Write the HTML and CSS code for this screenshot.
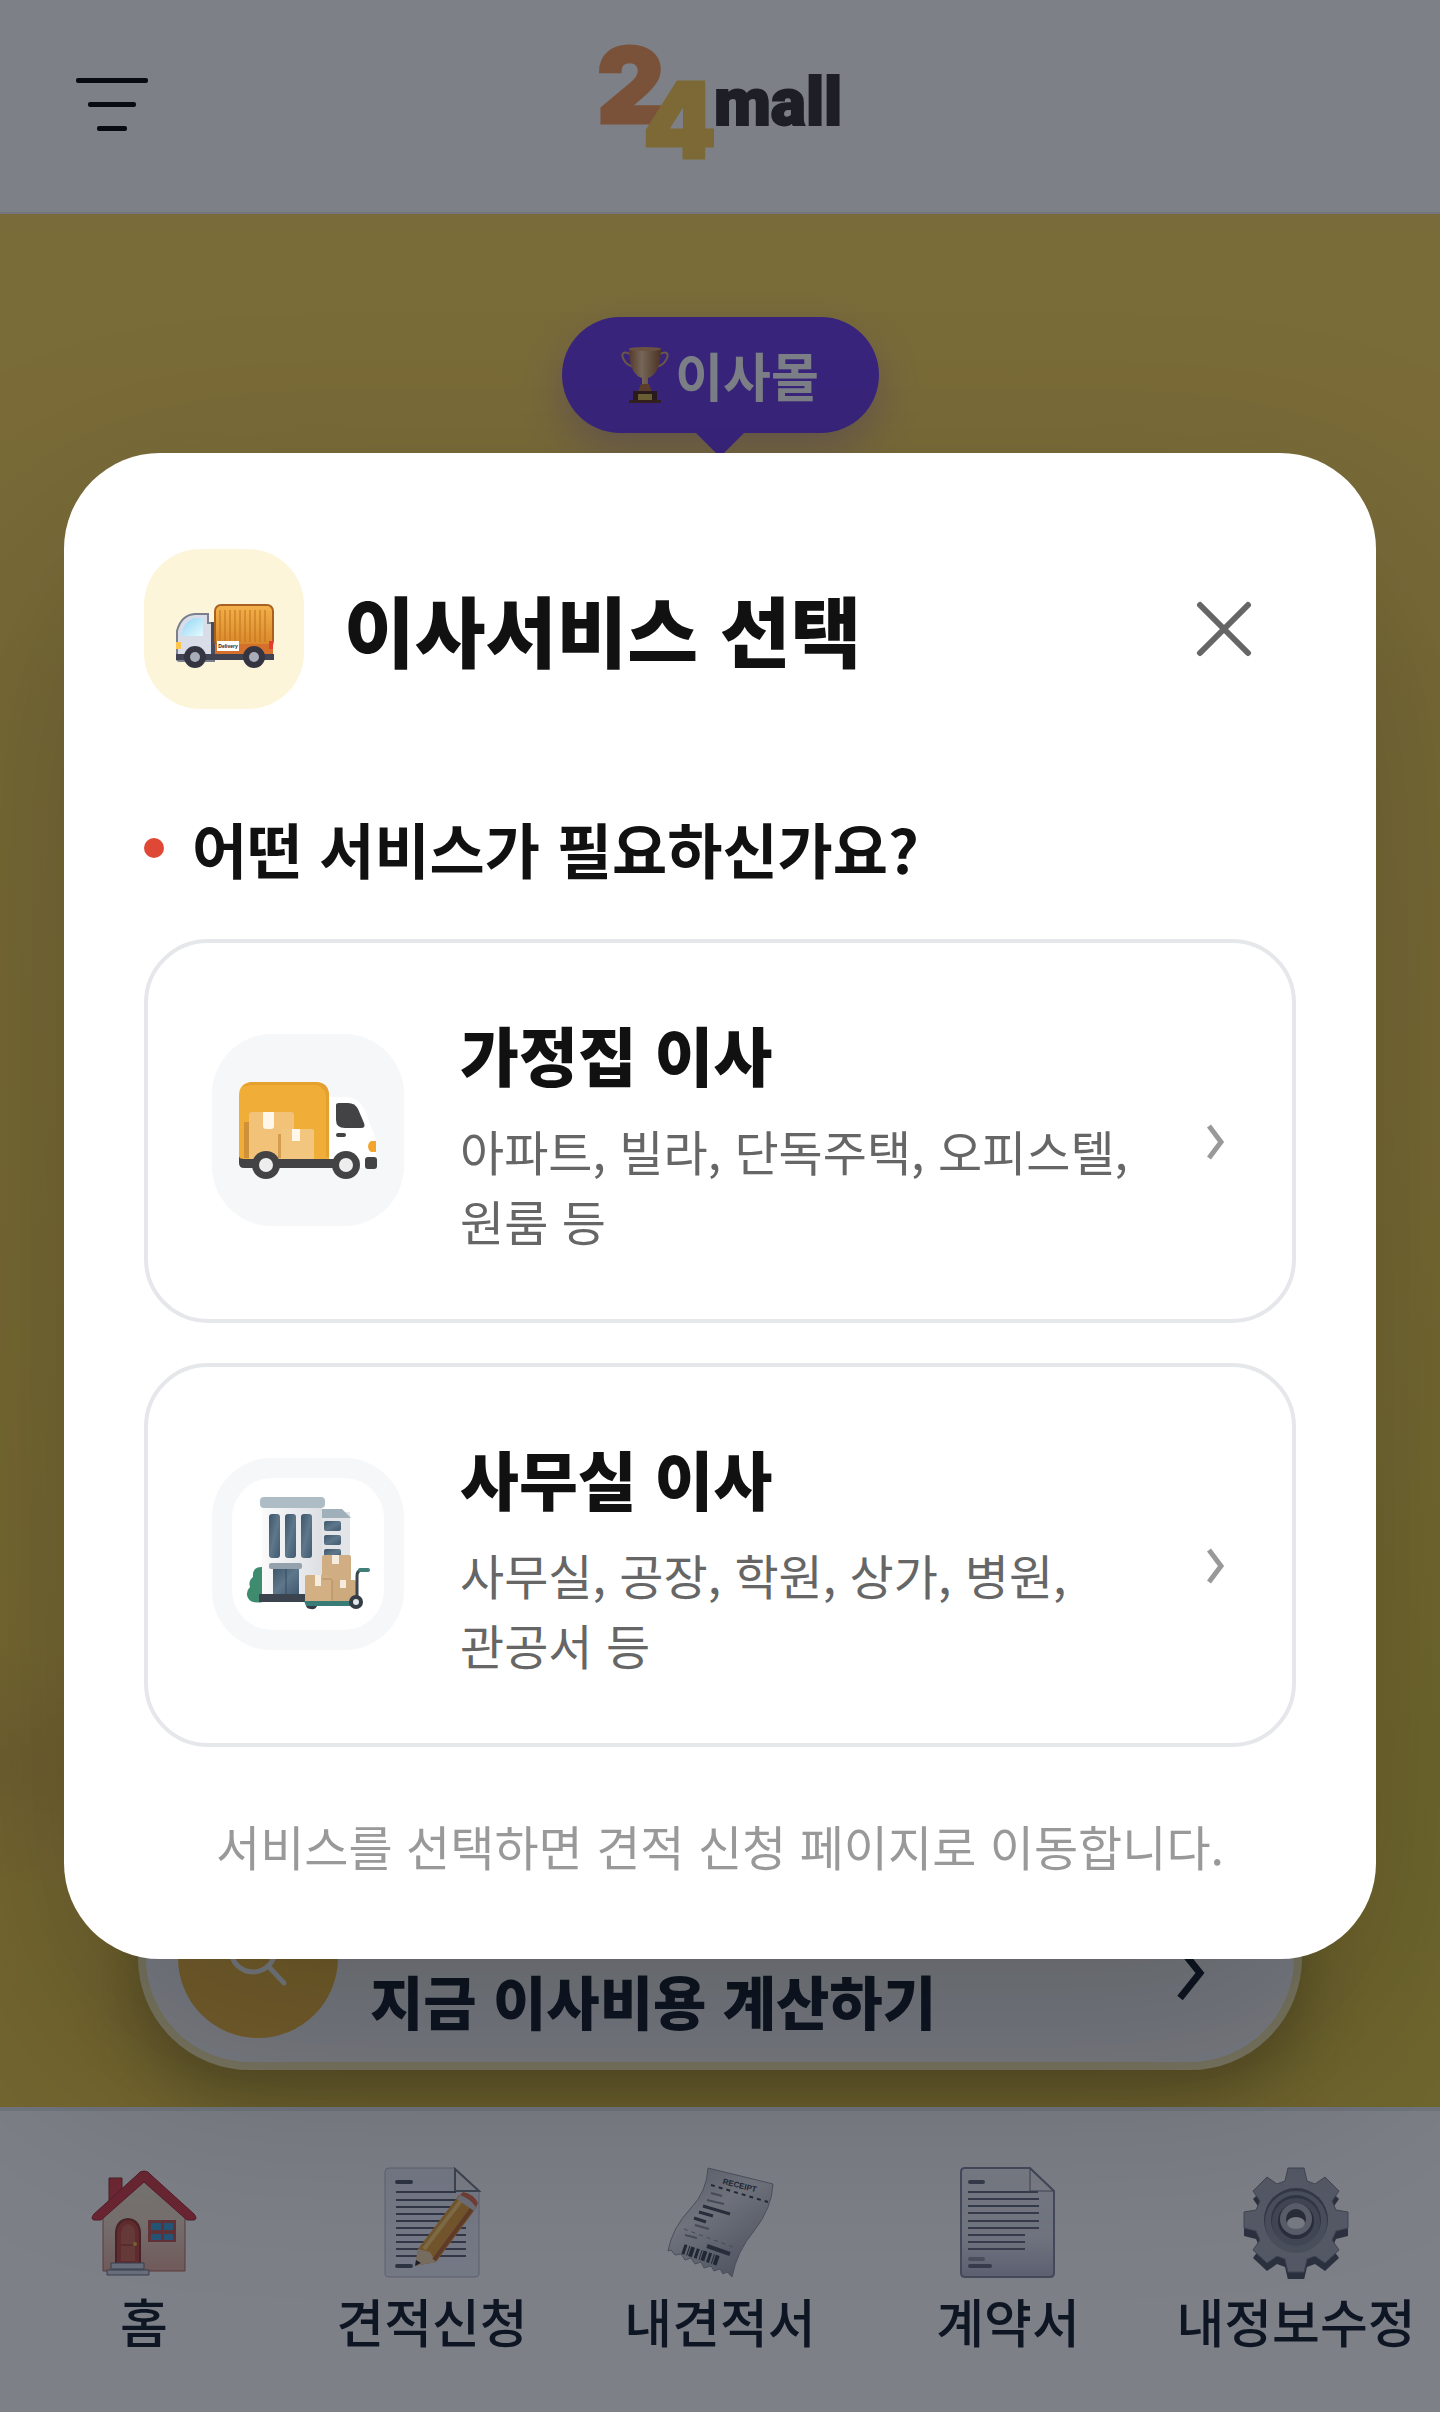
FILE: index.html
```html
<!DOCTYPE html>
<html lang="ko">
<head>
<meta charset="utf-8">
<meta name="viewport" content="width=device-width, initial-scale=1">
<title>24mall 이사몰</title>
<link rel="stylesheet" href="styles.css">
</head>
<body>
<div class="page">
  <header class="topbar">
    <button class="menu" type="button" aria-label="메뉴">
      <span class="menu-line"></span>
      <span class="menu-line menu-line-mid"></span>
      <span class="menu-line menu-line-short"></span>
    </button>
    <a class="logo" href="#" aria-label="24mall">
      <svg viewBox="0 0 250 200" width="250" height="200">
        <text class="logo-two" x="2" y="119">2</text>
        <text class="logo-four" x="48" y="154">4</text>
        <text class="logo-mall" x="119" y="121">mall</text>
      </svg>
    </a>
  </header>

  <main class="hero">
    <div class="badge">
      <svg class="badge-icon" viewBox="0 0 48 58" width="48" height="58" aria-hidden="true">
        <defs>
          <linearGradient id="cup" x1="0" x2="1"><stop offset="0" stop-color="#a8693c"/><stop offset=".4" stop-color="#f3cb9b"/><stop offset="1" stop-color="#96582c"/></linearGradient>
        </defs>
        <path d="M9 8C1 4 0 9 3 14c2 4 6 6 10 7M39 8c8-4 9 1 6 6-2 4-6 6-10 7" fill="none" stroke="#d9a877" stroke-width="2"/>
        <path d="M8 2h32c0 14-3 27-13 30v7h-6v-7C11 29 8 16 8 2z" fill="url(#cup)"/>
        <ellipse cx="24" cy="3" rx="16" ry="2" fill="#d9a06b"/>
        <path d="M20 38h8l3 8H17z" fill="#b8713b"/>
        <path d="M12 45h24v10H12z" fill="#4d2417"/><path d="M8 54h32v3H8z" fill="#65301f"/>
        <path d="M17 48h14v6H17z" fill="#d9b94c"/>
      </svg>
      <span>이사몰</span>
    </div>
    <a class="quote" href="#">
      <span class="quote-icon">
        <svg viewBox="0 0 80 80" width="80" height="80" aria-hidden="true"><circle cx="35" cy="32" r="22"/><path d="M51 49l15 16"/></svg>
      </span>
      <span class="quote-title">지금 이사비용 계산하기</span>
      <svg class="quote-arrow" viewBox="0 0 32 100" width="32" height="100" aria-hidden="true"><path d="M6 40l20 25L6 90"/></svg>
    </a>
  </main>

  <nav class="tabs">
    <a class="tab" href="#">
      <svg viewBox="0 0 110 112" width="110" height="112" aria-hidden="true">
        <defs><linearGradient id="wall" x2="0" y2="1"><stop offset="0" stop-color="#efe6cf"/><stop offset=".5" stop-color="#efdac8"/><stop offset="1" stop-color="#e5ad9f"/></linearGradient></defs>
        <path d="M20 11h13v24H20z" fill="#dc4148" stroke="#8d3030"/>
        <path d="M14 45l41-35 41 35v59H14z" fill="url(#wall)" stroke="#b5685c"/>
        <path d="M55 4Q51 4 48 8L5 47q-4 5 0 6h7l43-38 43 38h7q4-1 0-6L62 8q-3-4-7-4z" fill="#d63c48" stroke="#a92734"/>
        <path d="M27 97V65q1-12 12-13 11 1 12 13v32z" fill="#c1493f" stroke="#8f3630" stroke-width="2"/>
        <path d="M32 94V66q1-8 7-9 7 1 7 9v28z" fill="#cd6654"/><path d="M32 78h14" stroke="#96372d"/>
        <circle cx="46" cy="77" r="2" fill="#f4bd3f"/>
        <path d="M59 53h28v22H59z" fill="#c65656"/><path d="M62 56h10v7H62zm13 0h9v7h-9zM62 67h10v6H62zm13 0h9v6h-9z" fill="#3fa0dc"/>
        <path d="M22 96h33v6H22zm-4 7h42v5H18z" fill="#d3d7e5" stroke="#697087"/>
      </svg>
      <span>홈</span>
    </a>
    <a class="tab" href="#">
      <svg viewBox="0 0 110 112" width="110" height="112" aria-hidden="true">
        <path d="M8 5q0-4 4-4h66l24 23v83q0 3-4 3H12q-4 0-4-3z" fill="#edf0fa" stroke="#b9bccb"/>
        <path d="M78 2v22h24z" fill="#f5f6fb" stroke="#777b88" stroke-width="2"/>
        <path d="M19 25h60M19 33h60M19 40h70M19 47h70M19 54h70M19 61h70M19 68h70M19 75h70M19 82h70M19 89h70" stroke="#5c6073" stroke-width="2"/>
        <path d="M20 15h14M20 99h14" stroke="#555a6c" stroke-width="4" stroke-linecap="round"/>
        <path d="M38 99l3-17L82 28l18 12-41 55z" fill="#e9a239"/>
        <path d="M38 99l3-17 12 3 6 10z" fill="#f4d5ac"/><path d="M38 99l1-6 5 3z" fill="#2b2d36"/>
        <path d="M47 82l39-51" stroke="#ffd372" stroke-width="4"/><path d="M57 93l40-54" stroke="#c16b35" stroke-width="4"/>
        <path d="M80 32l4-5q12 0 17 10l-4 7z" fill="#dad9dd"/><path d="M83 28l3-3q11 2 15 11l-2 4q-7-9-16-12z" fill="#e5714e"/>
      </svg>
      <span>견적신청</span>
    </a>
    <a class="tab" href="#">
      <svg viewBox="0 0 110 112" width="110" height="112" aria-hidden="true">
        <defs><linearGradient id="slip" x2=".6" y2="1"><stop offset="0" stop-color="#b0b3bd"/><stop offset=".45" stop-color="#e6e7ec"/><stop offset="1" stop-color="#a0a3b0"/></linearGradient></defs>
        <path d="M43 1l65 16q-1 24-19 47-17 20-22 46l-5-5-4 2-3-5-6 2-3-5-7 2-3-6-6 2-4-6-6 2-4-6-6 1-4-5-3 1Q7 61 26 41 42 24 43 1z" fill="url(#slip)" stroke="#9497a3"/>
        <text class="slip-head" x="74" y="21" transform="rotate(14 74 21)">RECEIPT</text>
        <path d="M46 18l57 17" stroke="#3e4250" stroke-width="2" stroke-dasharray="4 4"/>
        <path d="M46 26l11 3M42 33l17 4M30 58l14 4M20 68l12 3" stroke="#8b8e9b" stroke-width="2"/>
        <path d="M38 39l27 8M34 45l14 4M29 51l12 4" stroke="#4b4f5e" stroke-width="3"/>
        <path d="M19 62l49 18" stroke="#898c98" stroke-dasharray="4 4"/>
        <path d="M42 79l23 8" stroke="#4a4e5c" stroke-width="4"/>
        <path d="M18 82l36 12" stroke="#3c404d" stroke-width="10" stroke-dasharray="3 2 1 1 4 2"/>
      </svg>
      <span>내견적서</span>
    </a>
    <a class="tab" href="#">
      <svg viewBox="0 0 110 112" width="110" height="112" aria-hidden="true">
        <defs><linearGradient id="sheet" x2="0" y2="1"><stop offset="0" stop-color="#f5f6fb"/><stop offset=".65" stop-color="#e4e5ef"/><stop offset="1" stop-color="#b7b9d0"/></linearGradient></defs>
        <path d="M8 5q0-4 4-4h65l24 23v82q0 4-4 4H12q-4 0-4-4z" fill="url(#sheet)" stroke="#8487a0" stroke-width="2"/>
        <path d="M77 2v22h23z" fill="#f5f6fa" stroke="#777a8d"/>
        <path d="M15 25h70M15 32h71M15 39h71M15 46h71M15 54h71M15 61h71M15 68h57M15 75h57M15 82h57" stroke="#676b7f" stroke-width="2"/>
        <path d="M17 15h13M17 99h20" stroke="#666a7c" stroke-width="4" stroke-linecap="round"/><path d="M17 92h13" stroke="#9093a3" stroke-width="4" stroke-linecap="round"/>
      </svg>
      <span>계약서</span>
    </a>
    <a class="tab" href="#">
      <svg viewBox="0 0 110 112" width="110" height="112" aria-hidden="true">
        <defs><path id="cog" d="M47 1h16l3 13 8 3 10-7 14 14-7 10 4 9 12 2v16l-12 3-4 9 7 10-14 13-10-7-8 3-3 13H47l-3-13-8-3-10 7-14-13 7-10-4-9-12-3V45l12-2 4-9-7-10 14-14 10 7 8-3z"/></defs>
        <use href="#cog" y="8" fill="#505364"/>
        <use href="#cog" fill="#a8abb7" stroke="#7d808f"/>
        <circle cx="55" cy="53" r="32" fill="#5f6273"/><circle cx="55" cy="55" r="31" fill="#9194a2"/>
        <circle cx="55" cy="53" r="25" fill="#5a5d6e"/><circle cx="55" cy="55" r="24" fill="#808392"/>
        <circle cx="55" cy="54" r="18" fill="#4b4e5e"/><circle cx="55" cy="52" r="16" fill="#b1b4c0"/>
        <circle cx="55" cy="52" r="10" fill="#484b57"/><ellipse cx="55" cy="56" rx="9" ry="6" fill="#f4f5f8"/>
      </svg>
      <span>내정보수정</span>
    </a>
  </nav>
</div>

<div class="overlay">
  <section class="modal" role="dialog" aria-modal="true" aria-labelledby="modal-title">
    <header class="modal-head">
      <span class="modal-icon">
        <svg viewBox="0 0 100 66" width="100" height="66" aria-hidden="true">
          <defs>
            <linearGradient id="glass" x2="1" y2="1"><stop offset="0" stop-color="#8fd4f3"/><stop offset="1" stop-color="#e5fbff"/></linearGradient>
            <linearGradient id="cargo" x2="0" y2="1"><stop offset="0" stop-color="#f4b14b"/><stop offset="1" stop-color="#d88627"/></linearGradient>
          </defs>
          <path d="M3 56V28Q7 12 21 11h13v9h6v38H6q-3 0-3-2z" fill="#d9dde8" stroke="#7b808e" stroke-width="2"/>
          <path d="M7 33q3-16 14-18h8v18z" fill="url(#glass)"/>
          <path d="M37 19h5v36h-5z" fill="#494b5c"/>
          <path d="M2 51h98v6H2z" fill="#414353"/>
          <path d="M2 39h5v7H2z" fill="#ffc44c"/>
          <rect x="41" y="2" width="58" height="42" rx="6" fill="url(#cargo)" stroke="#a76020" stroke-width="2"/>
          <path d="M46 7v32M51 7v32M56 7v32M61 7v32M66 7v32M71 7v32M76 7v32M81 7v32M86 7v32M91 7v32" stroke="#bd721f" stroke-width="1"/>
          <path d="M41 41h58v10H41z" fill="#d5702c"/><path d="M95 38h4v8h-4z" fill="#e33c31"/>
          <rect x="43" y="38" width="22" height="10" fill="#fff"/>
          <text class="truck-label" x="54" y="45">Delivery</text>
          <circle cx="21" cy="54" r="11" fill="#343540"/><circle cx="21" cy="54" r="5" fill="#a9adb8"/>
          <circle cx="80" cy="54" r="11" fill="#343540"/><circle cx="80" cy="54" r="5" fill="#a9adb8"/>
        </svg>
      </span>
      <h1 class="modal-title" id="modal-title">이사서비스 선택</h1>
      <button class="close" type="button" aria-label="닫기">
        <svg viewBox="0 0 56 56" width="56" height="56" aria-hidden="true"><path d="M4 4l48 48M52 4L4 52"/></svg>
      </button>
    </header>

    <h2 class="question">어떤 서비스가 필요하신가요?</h2>

    <div class="options">
      <button class="option" type="button">
        <span class="option-icon">
          <svg viewBox="0 0 140 100" width="140" height="100" aria-hidden="true">
            <path d="M92 17h16q13 0 19 14l8 20q3 6 3 15v22H92z" fill="#fff"/>
            <path d="M1 16Q1 2 15 2h62q14 0 14 14v66H1z" fill="#f0ae38"/>
            <path d="M12 5h66q9 2 10 12v60h3V16Q91 2 77 2H15q-7 0-10 5z" fill="#e5a12f"/>
            <path d="M6 42h6v36H6z" fill="#cf9238"/>
            <rect x="11" y="32" width="45" height="48" rx="3" fill="#f1c278"/><path d="M25 32h11v14q0 3-3 3h-5q-3 0-3-3z" fill="#fff7e9"/>
            <path d="M40 54h5v24h-5z" fill="#d49c51"/>
            <rect x="43" y="49" width="33" height="31" rx="2" fill="#f3c680"/><path d="M54 49h8v12h-8z" fill="#fff7e9"/>
            <path d="M1 76q0 3 5 3h92v9H6q-5 0-5-5z" fill="#434345"/>
            <rect x="127" y="77" width="12" height="12" rx="3" fill="#434345"/>
            <path d="M98 25q0-2 3-2h9q7 0 10 6l6 14q2 5-3 5h-16q-9 0-9-8z" fill="#434345"/>
            <rect x="98" y="53" width="10" height="4" rx="2" fill="#434345"/>
            <path d="M138 61h-5q-3 2-3 6 1 5 4 5h4z" fill="#f1a52d"/>
            <circle cx="28" cy="85" r="14" fill="#434345"/><circle cx="28" cy="85" r="7" fill="#ededed"/>
            <circle cx="108" cy="85" r="14" fill="#434345"/><circle cx="108" cy="85" r="7" fill="#ededed"/>
          </svg>
        </span>
        <span class="option-text">
          <strong class="option-title">가정집 이사</strong>
          <span class="option-desc">아파트, 빌라, 단독주택, 오피스텔, 원룸 등</span>
        </span>
        <svg class="option-arrow" viewBox="0 0 24 96" width="24" height="96" aria-hidden="true"><path d="M5 44l12 16L5 76"/></svg>
      </button>

      <button class="option" type="button">
        <span class="option-icon option-icon-framed">
          <svg viewBox="0 0 124 116" width="124" height="116" aria-hidden="true">
            <defs>
              <linearGradient id="pane" x2="1" y2="1"><stop offset="0" stop-color="#3d5669"/><stop offset=".5" stop-color="#5f778b"/><stop offset="1" stop-color="#405a70"/></linearGradient>
              <linearGradient id="face" x2="1"><stop offset="0" stop-color="#fafafb"/><stop offset="1" stop-color="#dddfe3"/></linearGradient>
            </defs>
            <path d="M17 71Q6 70 7 81q-5 4-3 10-5 5-2 11 3 6 15 4z" fill="#3f8b70"/>
            <path d="M76 16h28v52H76z" fill="#e2e4e7"/><path d="M76 13h20l9 9H76z" fill="#9fb0ba"/>
            <path d="M16 8h60v92H16z" fill="url(#face)"/>
            <rect x="14" y="1" width="65" height="11" rx="4" fill="#aebcc6"/>
            <g fill="url(#pane)"><rect x="23" y="18" width="11" height="44" rx="3"/><rect x="39" y="18" width="11" height="44" rx="3"/><rect x="55" y="18" width="11" height="44" rx="3"/><rect x="78" y="25" width="17" height="10" rx="2"/><rect x="78" y="39" width="17" height="10" rx="2"/><rect x="78" y="53" width="17" height="10" rx="2"/><path d="M27 72h26v26H27z"/></g>
            <path d="M40 73v25" stroke="#34495a"/>
            <rect x="23" y="67" width="33" height="6" rx="2" fill="#94a2ae"/>
            <path d="M13 98h48v8H13z" fill="#3b434e"/>
            <rect x="76" y="59" width="29" height="26" rx="2" fill="#d0ad83"/><path d="M86 59h7v9h-7z" fill="#f5ecdd"/>
            <rect x="86" y="84" width="24" height="22" rx="2" fill="#cda97e"/><path d="M94 84h6v8h-6z" fill="#f5ecdd"/>
            <rect x="59" y="79" width="27" height="28" rx="2" fill="#d3af84"/><path d="M69 79h6v11h-6z" fill="#f5ecdd"/>
            <path d="M76 83h10M86 84v21" stroke="#b18c62"/>
            <path d="M111 103V80q0-5 4-6" fill="none" stroke="#3b4550" stroke-width="3"/>
            <path d="M114 74h8" stroke="#407e77" stroke-width="4" stroke-linecap="round"/>
            <path d="M58 105h48v5H60z" fill="#397b77"/>
            <path d="M60 110h11q-2 4-6 3-4 0-5-3z" fill="#343c45"/>
            <circle cx="110" cy="106" r="7" fill="#343c45"/><circle cx="110" cy="106" r="3" fill="#e4e7ea"/>
          </svg>
        </span>
        <span class="option-text">
          <strong class="option-title">사무실 이사</strong>
          <span class="option-desc">사무실, 공장, 학원, 상가, 병원, 관공서 등</span>
        </span>
        <svg class="option-arrow" viewBox="0 0 24 96" width="24" height="96" aria-hidden="true"><path d="M5 44l12 16L5 76"/></svg>
      </button>
    </div>

    <p class="note">서비스를 선택하면 견적 신청 페이지로 이동합니다.</p>
  </section>
</div>
</body>
</html>
```
FILE: styles.css
```css
* {
  box-sizing: border-box;
}

body {
  margin: 0;
  color: #111;
  font-family: "Noto Sans CJK KR", "Noto Sans", sans-serif;
}

button {
  border: 0;
  padding: 0;
  background: none;
  color: inherit;
  font: inherit;
  text-align: left;
  cursor: pointer;
}

a {
  color: inherit;
  text-decoration: none;
}

svg {
  display: block;
  flex: none;
}

.page {
  display: flex;
  flex-direction: column;
  min-height: 100vh;
}

/* Top bar */
.topbar {
  display: grid;
  grid-template-columns: 1fr auto 1fr;
  align-items: center;
  height: 214px;
  padding: 0 76px 4px;
  border-bottom: 2px solid #f0e6ec;
  background: #fff;
}

.menu {
  display: flex;
  flex-direction: column;
  align-items: center;
  justify-self: start;
  gap: 19px;
  width: 72px;
}

.menu-line {
  width: 72px;
  height: 5px;
  border-radius: 2px;
  background: #000;
}

.menu-line-mid {
  width: 48px;
}

.menu-line-short {
  width: 30px;
}

.logo-two,
.logo-four {
  font: 900 104px "Inter", sans-serif;
  fill: #f99a55;
  stroke: #f99a55;
  stroke-width: 3;
}

.logo-four {
  fill: #fccd4f;
  stroke: #fccd4f;
}

.logo-mall {
  font: 900 66px "Roboto", sans-serif;
  fill: #302c2c;
  stroke: #302c2c;
  stroke-width: 2;
}

/* Hero */
.hero {
  display: flex;
  flex: 1;
  flex-direction: column;
  align-items: center;
  justify-content: space-between;
  padding: 103px 138px 37px;
  background:
    radial-gradient(ellipse 240px 120px at 0 82%, rgba(170, 90, 50, .15), transparent),
    radial-gradient(ellipse 300px 700px at 100% 85%, rgba(190, 200, 40, .25), transparent),
    linear-gradient(#f9d357, #f3cf4b 60%, #ecc843);
}

.badge {
  position: relative;
  display: flex;
  align-items: center;
  justify-content: center;
  gap: 6px;
  width: 317px;
  height: 116px;
  border-radius: 58px;
  background: #6b3ae7;
  box-shadow: 0 16px 40px rgba(107, 58, 231, .3);
  color: #fff;
  font-size: 52px;
  font-weight: 700;
  line-height: 76px;
}

.badge::after {
  position: absolute;
  top: 100%;
  left: 50%;
  margin-left: -24px;
  border: 24px solid transparent;
  border-bottom-width: 0;
  border-top-color: #6b3ae7;
  content: "";
}

.quote {
  display: flex;
  align-items: center;
  align-self: stretch;
  gap: 32px;
  padding: 24px 88px 24px 32px;
  border: 8px solid #fbeeaf;
  border-radius: 112px;
  background: #fff;
  box-shadow: 0 24px 64px rgba(60, 50, 0, .4);
}

.quote-icon {
  display: grid;
  flex: none;
  place-items: center;
  width: 160px;
  height: 160px;
  border-radius: 50%;
  background: #f7bd3c;
}

.quote-icon svg {
  fill: none;
  stroke: #fff;
  stroke-width: 5;
  stroke-linecap: round;
}

.quote-title {
  flex: 1;
  align-self: flex-end;
  color: #111827;
  font-size: 58px;
  font-weight: 800;
  line-height: 76px;
}

.quote-arrow {
  fill: none;
  stroke: #111827;
  stroke-width: 7;
}

/* Bottom navigation */
.tabs {
  display: grid;
  grid-template-columns: repeat(5, 1fr);
  height: 305px;
  padding-top: 56px;
  border-top: 4px solid #e5e7eb;
  background: #fff;
}

.tab {
  display: flex;
  flex-direction: column;
  align-items: center;
  gap: 4px;
  color: #111827;
  font-size: 52px;
  font-weight: 500;
  line-height: 76px;
  white-space: nowrap;
}

.slip-head {
  font: 700 8px "Liberation Sans", sans-serif;
  text-anchor: middle;
  fill: #3c404d;
}

/* Service picker */
.overlay {
  position: fixed;
  inset: 0;
  display: flex;
  align-items: center;
  justify-content: center;
  padding: 0 64px;
  background: rgba(14, 20, 34, .54);
}

.modal {
  width: 100%;
  padding: 96px 80px 78px;
  border-radius: 96px;
  background: #fff;
  box-shadow: 0 100px 240px rgba(0, 0, 0, .24);
}

.modal-head {
  display: flex;
  align-items: center;
  gap: 40px;
}

.modal-icon {
  display: grid;
  flex: none;
  place-items: center;
  width: 160px;
  height: 160px;
  padding-top: 14px;
  border-radius: 56px;
  background: #fdf5da;
}

.truck-label {
  font: 700 5px "Liberation Sans", sans-serif;
  text-anchor: middle;
  fill: #222;
}

.modal-title {
  flex: 1;
  margin: 0;
  font-size: 77px;
  font-weight: 800;
  line-height: 112px;
}

.close {
  display: grid;
  place-items: center;
  width: 144px;
  height: 144px;
}

.close svg {
  fill: none;
  stroke: #666;
  stroke-width: 6;
  stroke-linecap: round;
}

.question {
  display: flex;
  align-items: center;
  gap: 28px;
  margin: 94px 0 46px;
  font-size: 60px;
  font-weight: 700;
  line-height: 90px;
}

.question::before {
  width: 20px;
  height: 20px;
  border-radius: 50%;
  background: #e04836;
  content: "";
}

.options {
  display: flex;
  flex-direction: column;
  gap: 40px;
}

.option {
  display: flex;
  align-items: center;
  gap: 56px;
  padding: 62px 64px 64px;
  border: 4px solid #e5e7eb;
  border-radius: 64px;
  background: #fff;
}

.option-icon {
  display: grid;
  flex: none;
  place-items: center;
  width: 192px;
  height: 192px;
  border-radius: 60px;
  background: #f6f7f9;
}

.option-icon-framed {
  border: 20px solid #f6f7f9;
  background: #fff;
}

.option-text {
  display: flex;
  flex: 1;
  flex-direction: column;
  gap: 14px;
}

.option-title {
  font-size: 64px;
  font-weight: 800;
  line-height: 96px;
}

.option-desc {
  color: #666;
  font-size: 48px;
  line-height: 70px;
  word-break: keep-all;
}

.option-arrow {
  fill: none;
  stroke: #999;
  stroke-width: 5;
}

.note {
  margin: 62px 0 0;
  color: #999;
  font-size: 48px;
  line-height: 72px;
  text-align: center;
}
```
